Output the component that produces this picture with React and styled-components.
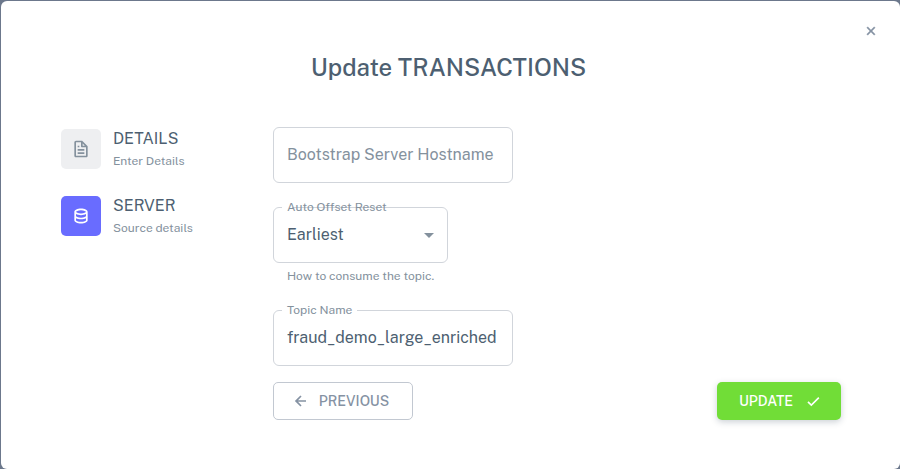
import React from 'react';
import styled, { createGlobalStyle } from 'styled-components';
import { BiCheck, BiData, BiFile, BiLeftArrowAlt, BiX } from 'react-icons/bi';

const ink = '#4d5f71';
const muted = '#84919d';
const outline = '#d1d5db';

const GlobalStyle = createGlobalStyle`
  *, *::before, *::after { box-sizing: border-box; }
  body {
    margin: 0;
    background: #6c788c;
    color: ${ink};
    font-family: 'Public Sans', Inter, 'Liberation Sans', sans-serif;
    font-size: 16px;
    line-height: 24px;
  }
  button, input, select { font: inherit; color: inherit; }
`;

const Backdrop = styled.div`
  min-height: 100vh;
  padding: 1px 0 0 1px;
  display: flex;
`;

const Dialog = styled.main`
  position: relative;
  flex: 1;
  min-width: 0;
  padding: 48px 59px 48px 60px;
  background: #fff;
  border-radius: 6px;
`;

const CloseButton = styled.button`
  position: absolute;
  top: 16px;
  right: 15px;
  display: grid;
  place-items: center;
  width: 28px;
  height: 28px;
  padding: 0;
  border: 0;
  background: none;
  color: #8592a3;
  cursor: pointer;

  svg { stroke: currentColor; stroke-width: 0.4; }
`;

const Title = styled.h1`
  margin: 0 0 42px;
  padding-right: 5px;
  text-align: center;
  font-size: 24px;
  line-height: 36px;
  font-weight: 500;
`;

const Wizard = styled.div`
  display: flex;
  gap: 52px;
`;

const Steps = styled.nav`
  display: flex;
  flex-direction: column;
  gap: 23px;
  flex: 0 0 160px;
`;

const Step = styled.button`
  display: flex;
  align-items: center;
  gap: 12px;
  padding: 0;
  border: 0;
  background: none;
  text-align: left;
  cursor: pointer;
`;

const StepIcon = styled.span`
  display: grid;
  place-items: center;
  width: 40px;
  height: 40px;
  border-radius: 5px;
  background: ${(p) => (p.$active ? '#696cff' : '#eeeff1')};
  color: ${(p) => (p.$active ? '#fff' : muted)};
`;

const StepText = styled.span`
  display: flex;
  flex-direction: column;
`;

const StepName = styled.span`
  line-height: 24px;
`;

const StepHint = styled.span`
  font-size: 12px;
  line-height: 20px;
  color: ${muted};
`;

const Form = styled.form`
  flex: 1;
  min-width: 0;
  display: flex;
  flex-direction: column;
  align-items: flex-start;
`;

const Field = styled.div`
  position: relative;
  width: ${(p) => p.$width};
`;

const Frame = styled.fieldset`
  position: absolute;
  inset: -5px 0 0;
  margin: 0;
  padding: 0 8px;
  min-width: 0;
  border: 1px solid ${outline};
  border-radius: 6px;
  pointer-events: none;
`;

const Notch = styled.legend`
  height: 11px;
  padding: 0;
  font-size: 12px;
  line-height: 11px;
  visibility: hidden;

  span { padding: 0 5px; }
`;

const FloatingLabel = styled.label`
  position: absolute;
  top: -9px;
  left: 14px;
  font-size: 12px;
  line-height: 18px;
  color: ${muted};
  white-space: nowrap;
`;

const Input = styled.input`
  display: block;
  width: 100%;
  height: 56px;
  padding: 0 14px 2px;
  border: 0;
  outline: 0;
  background: none;

  &::placeholder { color: ${muted}; opacity: 1; }
`;

const OutlinedInput = styled(Input)`
  padding: 0 13px 2px;
  border: 1px solid ${outline};
  border-radius: 6px;
`;

const Select = styled.select`
  display: block;
  width: 100%;
  height: 56px;
  padding: 0 32px 0 14px;
  border: 0;
  outline: 0;
  background: none;
  appearance: none;
`;

const Arrow = styled.svg`
  position: absolute;
  top: 26px;
  right: 14px;
  width: 10px;
  height: 5px;
  fill: ${muted};
  pointer-events: none;
`;

const Helper = styled.p`
  margin: 3px 14px 0;
  font-size: 12px;
  line-height: 20px;
  color: ${muted};
`;

const FieldGroup = styled.div`
  margin-bottom: ${(p) => p.$gap};
`;

const Actions = styled.div`
  align-self: stretch;
  display: flex;
  justify-content: space-between;
`;

const Button = styled.button`
  display: inline-flex;
  align-items: center;
  justify-content: center;
  height: 38px;
  border-radius: 5px;
  font-size: 14px;
  font-weight: 500;
  cursor: pointer;
`;

const OutlinedButton = styled(Button)`
  gap: 8px;
  width: 140px;
  padding: 0 22px 0 16px;
  border: 1px solid #c2c8d1;
  background: #fff;
  color: #8592a3;
`;

const SolidButton = styled(Button)`
  gap: 10px;
  width: 124px;
  padding: 0 16px 0 20px;
  border: 0;
  background: #71dd37;
  color: #fff;
  box-shadow: 0 2px 6px rgba(50, 71, 92, 0.25);
`;

const steps = [
  { name: 'DETAILS', hint: 'Enter Details', Icon: BiFile },
  { name: 'SERVER', hint: 'Source details', Icon: BiData, active: true },
];

export default function App() {
  return (
    <Backdrop>
      <GlobalStyle />
      <Dialog role="dialog" aria-labelledby="title">
        <CloseButton type="button" aria-label="Close">
          <BiX size={18} />
        </CloseButton>
        <Title id="title">Update TRANSACTIONS</Title>
        <Wizard>
          <Steps aria-label="Steps">
            {steps.map(({ name, hint, Icon, active }) => (
              <Step key={name} type="button" aria-current={active ? 'step' : undefined}>
                <StepIcon $active={active}>
                  <Icon size={20} />
                </StepIcon>
                <StepText>
                  <StepName>{name}</StepName>
                  <StepHint>{hint}</StepHint>
                </StepText>
              </Step>
            ))}
          </Steps>
          <Form onSubmit={(e) => e.preventDefault()}>
            <FieldGroup $gap="24px">
              <Field $width="240px">
                <OutlinedInput aria-label="Bootstrap Server Hostname" placeholder="Bootstrap Server Hostname" />
              </Field>
            </FieldGroup>
            <FieldGroup $gap="24px">
              <Field $width="175px">
                <Frame aria-hidden="true">
                  <Notch><span /></Notch>
                </Frame>
                <FloatingLabel htmlFor="offset">Auto Offset Reset</FloatingLabel>
                <Select id="offset" defaultValue="Earliest" aria-describedby="offset-help">
                  <option>Earliest</option>
                  <option>Latest</option>
                </Select>
                <Arrow viewBox="0 0 10 5" aria-hidden="true">
                  <path d="M0 0h10L5 5z" />
                </Arrow>
              </Field>
              <Helper id="offset-help">How to consume the topic.</Helper>
            </FieldGroup>
            <FieldGroup $gap="16px">
              <Field $width="240px">
                <Frame aria-hidden="true">
                  <Notch><span>Topic Name</span></Notch>
                </Frame>
                <FloatingLabel htmlFor="topic">Topic Name</FloatingLabel>
                <Input id="topic" defaultValue="fraud_demo_large_enriched" />
              </Field>
            </FieldGroup>
            <Actions>
              <OutlinedButton type="button">
                <BiLeftArrowAlt size={20} />
                PREVIOUS
              </OutlinedButton>
              <SolidButton type="submit">
                UPDATE
                <BiCheck size={20} />
              </SolidButton>
            </Actions>
          </Form>
        </Wizard>
      </Dialog>
    </Backdrop>
  );
}
